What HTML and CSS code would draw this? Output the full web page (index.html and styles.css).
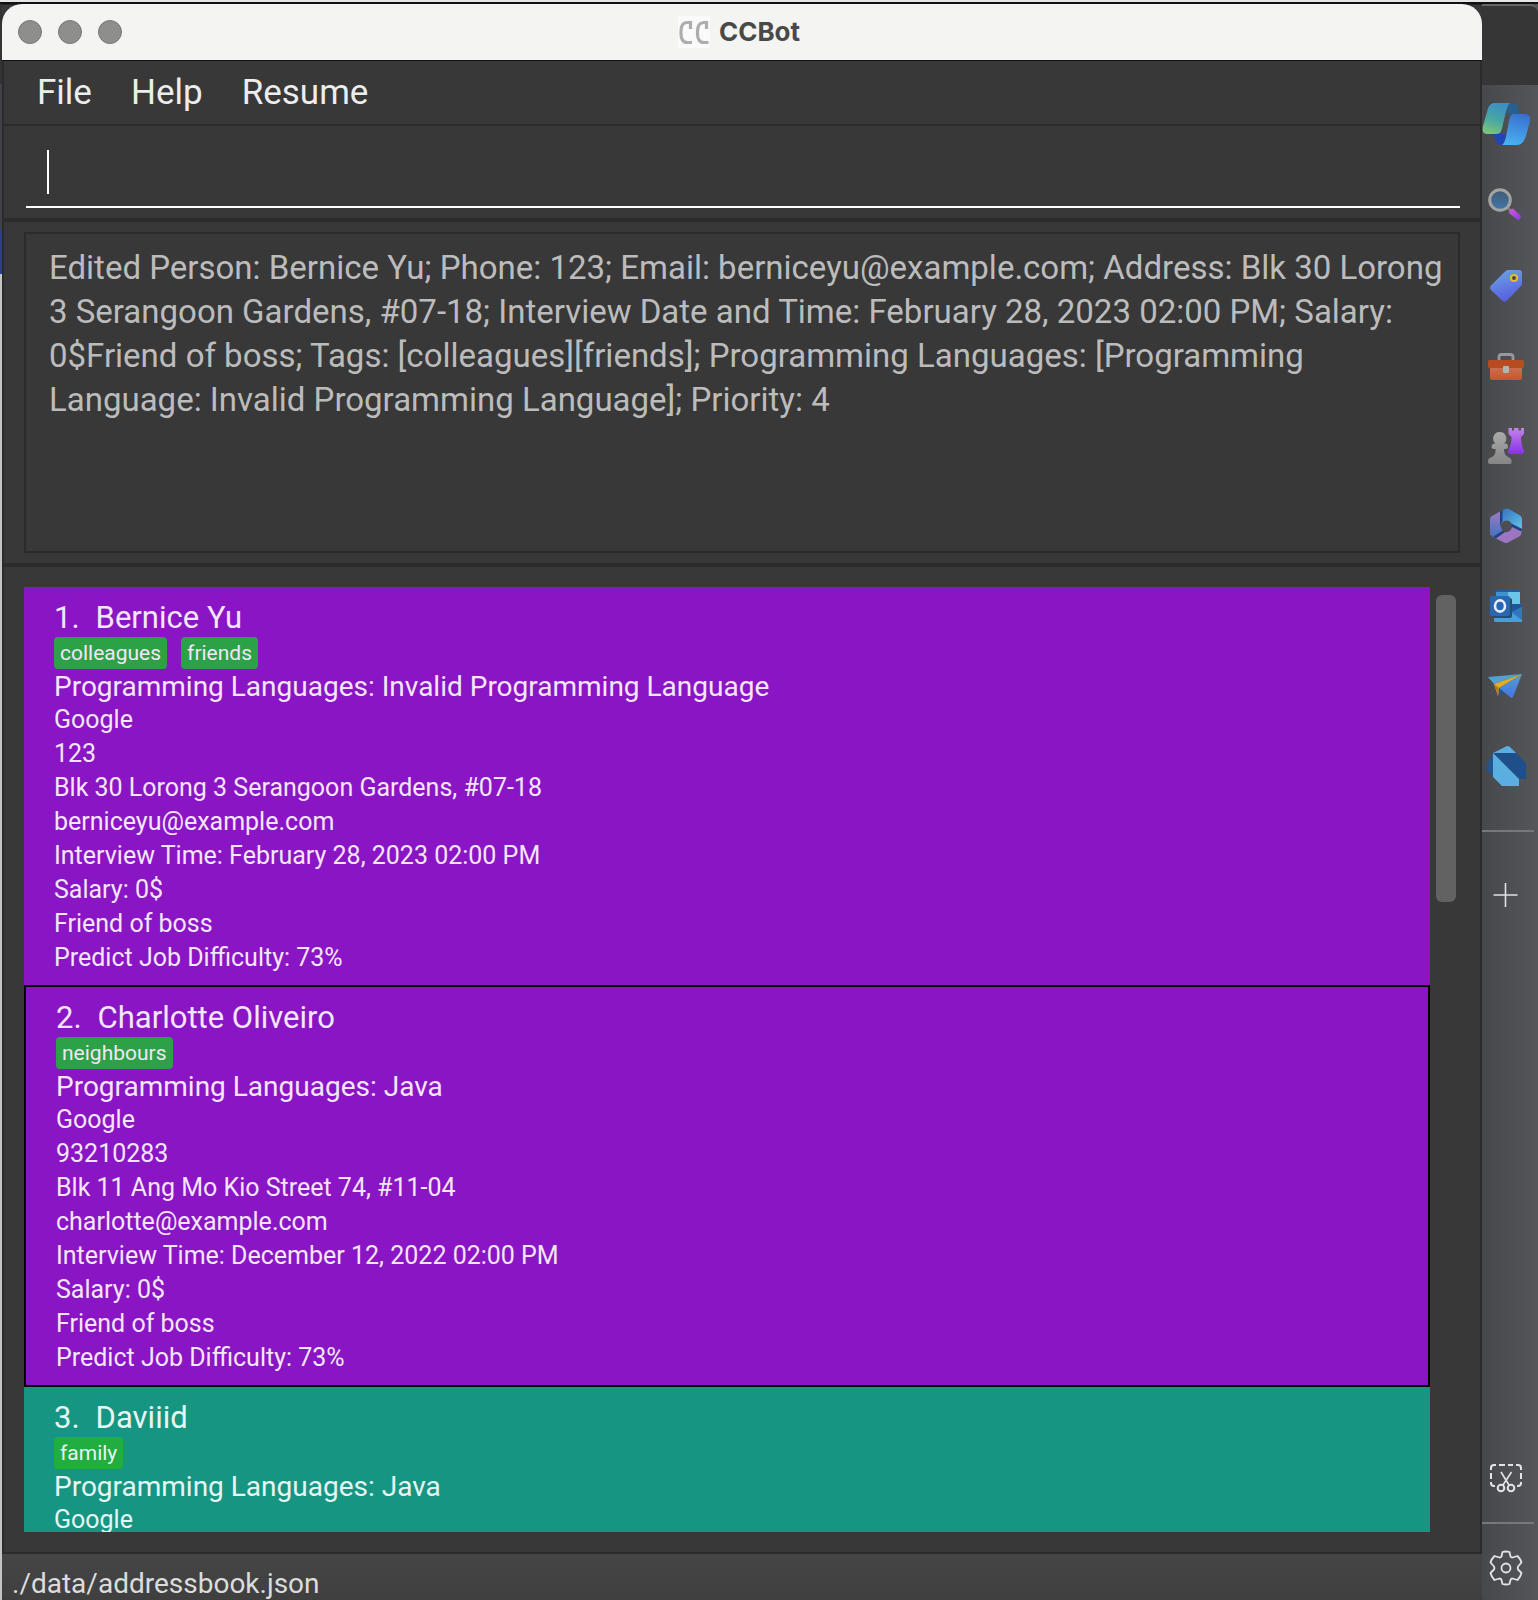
FILE: index.html
```html
<!DOCTYPE html>
<html lang="en">
<head>
<meta charset="utf-8">
<title>CCBot</title>
<link rel="stylesheet" href="styles.css">
</head>
<body>
<div class="desktop">
  <div class="backdrop-edge"></div>
  <main class="window">
    <header class="titlebar">
      <div class="lights"><span class="light"></span><span class="light"></span><span class="light"></span></div>
      <div class="title">
        <svg class="title-icon" viewBox="0 0 32 32" aria-hidden="true"><rect width="32" height="32" fill="#fafafa"/><path d="M12.500 13V6.500H9C4.500 6.500 3 10 3 15.500V18C3 23.500 5 26.500 9.500 26.500H14M28.500 13V6.500H26C21.500 6.500 19.500 10 19.500 15.500V18C19.500 23.500 21.500 26.500 26 26.500H30.500" fill="none" stroke="#adadad" stroke-width="3.200"/></svg>
        <h1 class="title-text">CCBot</h1>
      </div>
    </header>
    <div class="content">
      <nav class="menubar">
        <button class="menu" type="button">File</button>
        <button class="menu" type="button">Help</button>
        <button class="menu" type="button">Resume</button>
      </nav>
      <div class="command">
        <input class="command-input" type="text" aria-label="Command">
        <span class="caret"></span>
      </div>
      <div class="result">
        <textarea class="result-text" readonly aria-label="Result">Edited Person: Bernice Yu; Phone: 123; Email: berniceyu@example.com; Address: Blk 30 Lorong 3 Serangoon Gardens, #07-18; Interview Date and Time: February 28, 2023 02:00 PM; Salary: 0$Friend of boss; Tags: [colleagues][friends]; Programming Languages: [Programming Language: Invalid Programming Language]; Priority: 4</textarea>
      </div>
      <section class="people">
        <div class="list">
          <article class="card purple">
            <h2 class="name"><span>1.</span><span>Bernice Yu</span></h2>
            <div class="tags"><span class="tag">colleagues</span><span class="tag">friends</span></div>
            <p class="languages">Programming Languages: Invalid Programming Language</p>
            <p class="line">Google</p>
            <p class="line">123</p>
            <p class="line">Blk 30 Lorong 3 Serangoon Gardens, #07-18</p>
            <p class="line">berniceyu@example.com</p>
            <p class="line">Interview Time: February 28, 2023 02:00 PM</p>
            <p class="line">Salary: 0$</p>
            <p class="line">Friend of boss</p>
            <p class="line">Predict Job Difficulty: 73%</p>
          </article>
          <article class="card purple selected">
            <h2 class="name"><span>2.</span><span>Charlotte Oliveiro</span></h2>
            <div class="tags"><span class="tag">neighbours</span></div>
            <p class="languages">Programming Languages: Java</p>
            <p class="line">Google</p>
            <p class="line">93210283</p>
            <p class="line">Blk 11 Ang Mo Kio Street 74, #11-04</p>
            <p class="line">charlotte@example.com</p>
            <p class="line">Interview Time: December 12, 2022 02:00 PM</p>
            <p class="line">Salary: 0$</p>
            <p class="line">Friend of boss</p>
            <p class="line">Predict Job Difficulty: 73%</p>
          </article>
          <article class="card teal">
            <h2 class="name"><span>3.</span><span>Daviiid</span></h2>
            <div class="tags"><span class="tag">family</span></div>
            <p class="languages">Programming Languages: Java</p>
            <p class="line">Google</p>
          </article>
        </div>
        <div class="scroll"><div class="thumb"></div></div>
      </section>
    </div>
    <footer class="status">./data/addressbook.json</footer>
  </main>
  <aside class="side">
    <div class="side-top"></div>
    <nav class="side-nav">
      <button class="tool" type="button" aria-label="Copilot"><svg viewBox="0 0 48 48">
        <defs>
          <linearGradient id="cpA" x1="0.6" y1="0" x2="0.3" y2="1"><stop offset="0" stop-color="#3c8fc4"/><stop offset="0.5" stop-color="#45a5a4"/><stop offset="1" stop-color="#79c47c"/></linearGradient>
          <linearGradient id="cpB" x1="0.6" y1="0" x2="0.4" y2="1"><stop offset="0" stop-color="#3871cf"/><stop offset="1" stop-color="#4ab0ef"/></linearGradient>
        </defs>
        <path d="M24 12 27 2H31C36 2 36.500 8 38 13H29Z" fill="#27608c"/>
        <path d="M11 33H25L21 44H19C14 44 14 37 11 33Z" fill="#2145b8"/>
        <path d="M13 2H28C24 5 22 22 19.500 29C18.500 32 17 33 14 33H5C1 33 0 30 1 25L5.500 9C7 4 9 2 13 2Z" fill="url(#cpA)"/>
        <path d="M32 13H43C47 13 49 16 48 20L44 35C42 41 39 44 35 44H20C24 42 25 29 27 20C28 15 29 13 32 13Z" fill="url(#cpB)"/>
      </svg></button>
      <button class="tool" type="button" aria-label="Search"><svg viewBox="0 0 48 48">
        <defs><linearGradient id="gl" x1="0" y1="0" x2="0" y2="1"><stop offset="0" stop-color="#405a70"/><stop offset="1" stop-color="#4377ad"/></linearGradient>
        <linearGradient id="hd" x1="0" y1="0" x2="1" y2="1"><stop offset="0" stop-color="#d55bd3"/><stop offset="1" stop-color="#8a36ea"/></linearGradient></defs>
        <path d="M26 27 30 31" stroke="#777" stroke-width="3"/>
        <circle cx="18" cy="19" r="10.300" fill="url(#gl)" stroke="#a3a3a1" stroke-width="3"/>
        <path d="M31 27.500 38.500 34.500Q39.500 36 38 37.500L36.500 39.500 27.500 32.500Q26.500 31 28 29Z" fill="url(#hd)"/>
      </svg></button>
      <button class="tool" type="button" aria-label="Shopping"><svg viewBox="0 0 48 48">
        <defs><linearGradient id="tg" x1="0.3" y1="0" x2="0.6" y2="1"><stop offset="0" stop-color="#6ba1e2"/><stop offset="1" stop-color="#565be0"/></linearGradient></defs>
        <path d="M26 9H37Q40 9 40 12V22Q40 24 38.500 25.500L25 39.500Q22.500 42 20 39.500L9 29Q7 26.500 9 24.500L23 10.500Q24.500 9 26 9Z" fill="url(#tg)"/>
        <circle cx="32" cy="17" r="3" fill="#444" stroke="#e3bd29" stroke-width="2.200"/>
      </svg></button>
      <button class="tool" type="button" aria-label="Tools"><svg viewBox="0 0 48 48">
        <defs><linearGradient id="tb" x1="0" y1="0" x2="0" y2="1"><stop offset="0" stop-color="#c87252"/><stop offset="1" stop-color="#c85528"/></linearGradient></defs>
        <path d="M17 20V16Q17 13.500 19.500 13.500H28.500Q31 13.500 31 16V20" fill="none" stroke="#96989b" stroke-width="2.800"/>
        <path d="M8 26H40V37Q40 39 38 39H10Q8 39 8 37Z" fill="url(#tb)"/>
        <rect x="6" y="19" width="36" height="8" rx="1.500" fill="#b74b22"/>
        <rect x="21" y="25" width="6" height="7" rx="1" fill="#b1b3b4"/>
      </svg></button>
      <button class="tool" type="button" aria-label="Games"><svg viewBox="0 0 48 48">
        <defs><linearGradient id="rk" x1="0" y1="0" x2="0" y2="1"><stop offset="0" stop-color="#c583e8"/><stop offset="1" stop-color="#8830ec"/></linearGradient>
        <linearGradient id="pw" x1="0" y1="0" x2="0" y2="1"><stop offset="0" stop-color="#aaa"/><stop offset="1" stop-color="#858585"/></linearGradient></defs>
        <path d="M26.500 7H30V9.500H32V7H36.500V9.500H39V7H42V13L39 16Q39 24 42 30V31Q42 33 40 33H28Q26 33 26 31V30Q29.500 24 29.500 16L26.500 13Z" fill="url(#rk)"/>
        <path d="M17.700 11A6.500 6.500 0 0 1 22 22.500H24Q26 23 26 25.500T23.500 28H22Q22 34 26 36Q29.500 37 29.500 40V41.500Q29.500 43 28 43H8Q6 43 6 41V40Q6 37 10 36Q14 34 13.500 28H12Q9.500 28 9.500 25.500T12 22.500H13.500A6.500 6.500 0 0 1 17.700 11Z" fill="url(#pw)"/>
      </svg></button>
      <button class="tool" type="button" aria-label="Microsoft 365"><svg viewBox="0 0 48 48">
        <defs><linearGradient id="ma" x1="0" y1="0" x2="0" y2="1"><stop offset="0" stop-color="#a77bc3"/><stop offset="1" stop-color="#3f70c1"/></linearGradient>
        <linearGradient id="mb" x1="0" y1="0" x2="1" y2="1"><stop offset="0" stop-color="#346dc0"/><stop offset="1" stop-color="#5fc4e8"/></linearGradient></defs>
        <path d="M18 10.500 25 8 21 19.500 18 24 21 31 12 37 9.500 35Q8 34 8 31V18Q8 16 10 15Z" fill="url(#ma)"/>
        <path d="M19 10 23 8Q25 7 27 8L38 14.500Q40 15.500 40 18V28L30 23Q27 18 22 20L18 23.500V13Z" fill="url(#mb)"/>
        <path d="M18 10.500 20.500 9V20L18 24Z" fill="#20407d"/>
        <path d="M30 23 40 28 38 30.500 29 26Z" fill="#233f86"/>
        <path d="M30 26 39.500 30.500Q40 33 38 35L27 41Q24 43 21 41L12 36.500 22 31Q29 32 30 26Z" fill="#9d76c3"/>
        <path d="M11 36 20 30 23 31 14 37.500Z" fill="#254176"/>
      </svg></button>
      <button class="tool" type="button" aria-label="Outlook"><svg viewBox="0 0 48 48">
        <rect x="14" y="9" width="24" height="20" fill="#3e93ce"/><rect x="26" y="11" width="12" height="12" fill="#6cc5e9"/>
        <rect x="14" y="9" width="24" height="2" fill="#235c9f"/>
        <path d="M12 29H30L40 23V41H14Q12 41 12 39Z" fill="#397dc3"/><path d="M12 32 30 32 40 39V41H14Q12 41 12 39Z" fill="#4a9dd6"/>
        <path d="M28 23H38L40 24V26L30 31H28Z" fill="#1f569b"/><path d="M30 31 40 26V39Z" fill="#2f78c0"/>
        <rect x="10" y="17" width="20" height="20" rx="2" fill="#294d68"/><rect x="8" y="15" width="20" height="20" rx="2" fill="#2867b3"/>
        <ellipse cx="18" cy="25" rx="5" ry="5.600" fill="none" stroke="#e9eef2" stroke-width="2.600"/>
      </svg></button>
      <button class="tool" type="button" aria-label="Drop"><svg viewBox="0 0 48 48">
        <defs><linearGradient id="pl" x1="0" y1="0" x2="0" y2="1"><stop offset="0" stop-color="#559dd6"/><stop offset="1" stop-color="#4375df"/></linearGradient></defs>
        <path d="M6 16 40 13 12 23Z" fill="#50a3ce"/><path d="M17 27 16 35 24 30Z" fill="#2753a1"/>
        <path d="M40 13 31 36Q30 38 28 36L17 27Z" fill="url(#pl)"/><path d="M12 23 40 13 17 27 16 35Z" fill="#e1ab2d"/><path d="M12 23 17 27 16 35Z" fill="#b9792a"/>
      </svg></button>
      <button class="tool" type="button" aria-label="Dart"><svg viewBox="0 0 48 48">
        <path d="M11 12 4 26Q4 28 5 29L11 36Z" fill="#24548c"/><path d="M11 12H34L44 22V38H37Z" fill="#1e4f8a"/>
        <path d="M11 12 24 5.500Q26 4.500 28 6L34 12Z" fill="#5aaee0"/><path d="M11 12 37 38V45H20L11 36Z" fill="#5aaee0"/>
      </svg></button>
      <hr class="rule">
      <button class="tool short" type="button" aria-label="Add"><svg viewBox="0 0 48 48"><path d="M23.500 12V36M11.500 24H35.500" stroke="#e2e2e2" stroke-width="1.600"/></svg></button>
    </nav>
    <div class="side-foot">
      <button class="tool short" type="button" aria-label="Screenshot"><svg viewBox="0 0 48 48" fill="none" stroke="#e4e4e4" stroke-width="2">
        <path d="M9 16V14Q9 11 12 11H14M17 11H23M26 11H31M34 11H36Q39 11 39 14V16M39 19V25M39 28V29Q39 32 36 32H35M9 19V25M9 28V29Q9 32 12 32H13"/>
        <path d="M19 18 27 31M29.500 18 21 31" stroke-width="1.600"/><circle cx="19" cy="34" r="3.300"/><circle cx="29" cy="34" r="3.300"/>
      </svg></button>
      <hr class="rule">
      <button class="tool short" type="button" aria-label="Settings"><svg viewBox="0 0 48 48" fill="none" stroke="#e4e4e4" stroke-width="1.800" stroke-linejoin="round">
        <path d="M20.500 8Q24 7 27.500 8L28.500 12.500Q29 13.500 30.500 13.500L35.500 12Q38.500 15 39.500 18.500L36 22.500Q35.500 24 36 25.500L39.500 29Q38.500 33 35.500 36L30.500 34.500Q29 34.500 28.500 36L27.500 40Q24 41 20.500 40L19.500 36Q19 34.500 17.500 34.500L12.500 36Q9.500 33 8.500 29L12 25.500Q13 24 12 22.500L8.500 18.500Q9.500 15 12.500 12L17.500 13.500Q19 13.500 19.500 12.500Z"/><circle cx="24" cy="24" r="4.500"/>
      </svg></button>
    </div>
  </aside>
</div>
</body>
</html>
```
FILE: styles.css
```css
* { box-sizing: border-box; }

body {
  margin: 0;
  background: #2f2f30;
  font-family: Roboto, "Liberation Sans", sans-serif;
}

button, input, textarea { font-family: inherit; }
button { border: 0; padding: 0; background: none; }
h1, h2, p { margin: 0; font-weight: 400; }

.desktop {
  display: grid;
  grid-template-columns: 2px minmax(0, 1fr) 56px;
  height: 100vh;
  overflow: hidden;
  border-top: 2px solid #e6e6e6;
  padding-top: 2px;
  background: linear-gradient(#111 0, #111 2px, #38383a 3px);
}

.backdrop-edge {
  background: linear-gradient(#333 0, #333 80px, #404046 80px, #404046 226px, #2e3b94 226px, #2e3b94 270px, #c4c4c4 270px);
}

.window {
  display: flex;
  flex-direction: column;
  min-height: 0;
  border-radius: 20px 20px 4px 4px;
  overflow: hidden;
  background: #383838;
}

.titlebar {
  display: grid;
  grid-template-columns: 120px 1fr 142px;
  align-items: center;
  flex: none;
  height: 57px;
  padding: 0 0 1px 16px;
  background: #f4f4f2;
  border-bottom: 1px solid #111;
}

.lights { display: flex; gap: 16px; }
.light { width: 24px; height: 24px; border: 1px solid #777; border-radius: 50%; background: #8e8e8c; }
.title { display: flex; align-items: center; justify-content: center; gap: 9px; }
.title-icon { width: 32px; height: 32px; }
.title-text { font-family: Inter, sans-serif; font-size: 26px; line-height: 32px; font-weight: 700; color: #494947; }

.content {
  display: flex;
  flex-direction: column;
  flex: 1;
  min-height: 0;
  border: solid #2b2b2b;
  border-width: 0 2px;
}

.menubar {
  display: flex;
  gap: 39px;
  flex: none;
  height: 65px;
  padding: 0 33px;
  border-bottom: 2px solid #2b2b2b;
}
.menu { font-size: 35px; line-height: 62px; color: #ededed; }

.command {
  position: relative;
  flex: none;
  padding: 10px 20px 10px 22px;
  border-bottom: 4px solid #2b2b2b;
}
.command-input {
  display: block;
  width: 100%;
  height: 72px;
  padding: 0 20px;
  border: 0;
  border-bottom: 2px solid #fff;
  outline: 0;
  background: transparent;
  color: #fff;
  font-size: 33px;
}
.caret { position: absolute; left: 43px; top: 24px; width: 2px; height: 44px; background: #fff; }

.result { flex: none; padding: 10px 20px; border-bottom: 4px solid #2b2b2b; }
.result-text {
  display: block;
  width: 100%;
  height: 321px;
  padding: 12px 12px 12px 23px;
  border: 2px solid #2b2b2b;
  outline: 0;
  resize: none;
  overflow: hidden;
  background: transparent;
  color: #bcbcbc;
  font-size: 33px;
  line-height: 44px;
}

.people { display: flex; flex: 1; min-height: 0; padding: 20px; border-bottom: 2px solid #2b2b2b; }
.list { flex: 1; min-width: 0; overflow: hidden; }
.card { padding: 10px 30px; color: #f4e6fa; }
.purple { background: #8a15c4; }
.teal { background: #179583; color: #e6f6f3; padding-bottom: 300px; }
.selected { border: 2px solid #000; }
.name { display: flex; gap: 16px; font-size: 31px; line-height: 42px; height: 40px; }
.tags { display: flex; gap: 14px; }
.tag { height: 32px; padding: 0 6px; border-radius: 4px; background: #2ca147; font-size: 21px; line-height: 32px; }
.teal .tag { background: #22ad40; }
.languages { font-size: 28px; line-height: 36px; height: 34px; }
.line { font-size: 25px; line-height: 34px; }

.scroll { flex: none; width: 30px; padding: 8px 4px 0 6px; }
.thumb { height: 307px; border-radius: 6px; background: #626262; }

.status {
  flex: none;
  height: 46px;
  padding: 14px 10px 0;
  background: linear-gradient(#454545, #3f3f3f);
  color: #dcdcdc;
  font-size: 28px;
  line-height: 32px;
}

.side { display: flex; flex-direction: column; min-height: 0; background: linear-gradient(90deg, #47484b, #55565b); }
.side-top { flex: none; height: 81px; border-top: 2px solid #666; border-radius: 0 8px 0 0; background: #363636; }
.side-nav { flex: 1; }
.tool { display: flex; align-items: center; width: 48px; height: 80px; }
.tool svg { display: block; width: 48px; height: 48px; }
.short { height: 64px; }
.rule { height: 2px; margin: 25px 4px 31px 0; border: 0; background: #77787b; }
.side-foot .rule { margin: 12px 4px 12px 0; }
```
